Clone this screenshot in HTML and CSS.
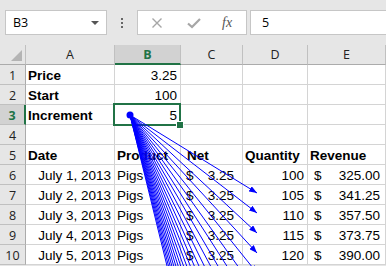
FILE: index.html
```html
<!DOCTYPE html>
<html lang="en">
<head>
  <meta charset="UTF-8">
  <title>Trace Dependents</title>
  <link rel="stylesheet" href="styles.css">
</head>
<body>
  <div class="formula-bar">
    <div class="name-box">
      <span>B3</span>
      <span class="caret"></span>
    </div>
    <div class="grip"><i></i><i></i><i></i></div>
    <div class="fx-box">
      <svg width="12" height="12" viewBox="0 0 12 12"><path d="M1.5 1.5 L10.5 10.5 M10.5 1.5 L1.5 10.5" stroke="#a6a6a6" stroke-width="1.4" fill="none"/></svg>
      <svg width="14" height="12" viewBox="0 0 14 12"><path d="M1 6.5 L5 10 L13 2" stroke="#a6a6a6" stroke-width="2.2" fill="none"/></svg>
      <span class="fx">fx</span>
    </div>
    <div class="formula-input">5</div>
  </div>

  <div class="grid">
    <div class="hd corner"></div>
    <div class="hd">A</div>
    <div class="hd active-col">B</div>
    <div class="hd">C</div>
    <div class="hd">D</div>
    <div class="hd">E</div>

    <div class="rn">1</div>
    <div class="c b">Price</div>
    <div class="c r">3.25</div>
    <div class="c"></div><div class="c"></div><div class="c"></div>

    <div class="rn">2</div>
    <div class="c b">Start</div>
    <div class="c r">100</div>
    <div class="c"></div><div class="c"></div><div class="c"></div>

    <div class="rn active-row">3</div>
    <div class="c b">Increment</div>
    <div class="c r">5</div>
    <div class="c"></div><div class="c"></div><div class="c"></div>

    <div class="rn">4</div>
    <div class="c"></div><div class="c"></div><div class="c"></div><div class="c"></div><div class="c"></div>

    <div class="rn">5</div>
    <div class="c b">Date</div>
    <div class="c b">Product</div>
    <div class="c b net">Net</div>
    <div class="c b">Quantity</div>
    <div class="c b">Revenue</div>

    <div class="rn">6</div>
    <div class="c r">July 1, 2013</div>
    <div class="c">Pigs</div>
    <div class="c acc"><span>$</span><span>3.25</span></div>
    <div class="c r">100</div>
    <div class="c acc rev"><span>$</span><span>325.00</span></div>

    <div class="rn">7</div>
    <div class="c r">July 2, 2013</div>
    <div class="c">Pigs</div>
    <div class="c acc"><span>$</span><span>3.25</span></div>
    <div class="c r">105</div>
    <div class="c acc rev"><span>$</span><span>341.25</span></div>

    <div class="rn">8</div>
    <div class="c r">July 3, 2013</div>
    <div class="c">Pigs</div>
    <div class="c acc"><span>$</span><span>3.25</span></div>
    <div class="c r">110</div>
    <div class="c acc rev"><span>$</span><span>357.50</span></div>

    <div class="rn">9</div>
    <div class="c r">July 4, 2013</div>
    <div class="c">Pigs</div>
    <div class="c acc"><span>$</span><span>3.25</span></div>
    <div class="c r">115</div>
    <div class="c acc rev"><span>$</span><span>373.75</span></div>

    <div class="rn">10</div>
    <div class="c r">July 5, 2013</div>
    <div class="c">Pigs</div>
    <div class="c acc"><span>$</span><span>3.25</span></div>
    <div class="c r">120</div>
    <div class="c acc rev"><span>$</span><span>390.00</span></div>
  </div>

  <div class="selection"><span class="handle"></span></div>

  <svg class="arrows" width="386" height="266" viewBox="0 0 386 266">
    <defs>
      <marker id="ah" markerWidth="8" markerHeight="6" refX="8" refY="3" orient="auto" markerUnits="userSpaceOnUse">
        <path d="M0 0 L8 3 L0 6 Z" fill="#0000ff"/>
      </marker>
    </defs>
    <g stroke="#0000ff" stroke-width="1" marker-end="url(#ah)">
      <line x1="130" y1="115" x2="257" y2="193"/>
      <line x1="130" y1="115" x2="257" y2="213"/>
      <line x1="130" y1="115" x2="257" y2="233"/>
      <line x1="130" y1="115" x2="257" y2="253"/>
      <line x1="130" y1="115" x2="257" y2="273"/>
      <line x1="130" y1="115" x2="257" y2="293"/>
      <line x1="130" y1="115" x2="257" y2="313"/>
      <line x1="130" y1="115" x2="257" y2="333"/>
      <line x1="130" y1="115" x2="257" y2="353"/>
      <line x1="130" y1="115" x2="257" y2="373"/>
      <line x1="130" y1="115" x2="257" y2="393"/>
      <line x1="130" y1="115" x2="257" y2="413"/>
      <line x1="130" y1="115" x2="257" y2="433"/>
      <line x1="130" y1="115" x2="257" y2="453"/>
      <line x1="130" y1="115" x2="257" y2="473"/>
      <line x1="130" y1="115" x2="257" y2="493"/>
      <line x1="130" y1="115" x2="257" y2="513"/>
      <line x1="130" y1="115" x2="257" y2="533"/>
      <line x1="130" y1="115" x2="257" y2="553"/>
      <line x1="130" y1="115" x2="257" y2="573"/>
      <line x1="130" y1="115" x2="257" y2="593"/>
      <line x1="130" y1="115" x2="257" y2="613"/>
      <line x1="130" y1="115" x2="257" y2="633"/>
    </g>
    <circle cx="130" cy="115" r="3.5" fill="#0000ff"/>
  </svg>
</body>
</html>
```

FILE: styles.css
```css
body {
  margin: 0;
  position: relative;
  width: 386px;
  height: 266px;
  overflow: hidden;
  background: #e6e6e6;
  font-family: "Liberation Sans", Arial, sans-serif;
  color: #000;
}

.formula-bar {
  height: 45px;
  box-sizing: border-box;
  padding: 10px 0 0 5px;
  display: flex;
  align-items: flex-start;
  font-family: "Open Sans", "Noto Sans", sans-serif;
  font-size: 12.5px;
}

.name-box {
  width: 102px;
  height: 25px;
  box-sizing: border-box;
  background: #fff;
  border: 1px solid #c6c6c6;
  display: flex;
  align-items: center;
  justify-content: space-between;
  padding: 0 7px 0 7px;
}

.caret {
  width: 0;
  height: 0;
  border-left: 4px solid transparent;
  border-right: 4px solid transparent;
  border-top: 4px solid #555;
}

.grip {
  width: 30px;
  height: 25px;
  display: flex;
  flex-direction: column;
  align-items: center;
  justify-content: center;
  gap: 2px;
}

.grip i {
  width: 2px;
  height: 2px;
  background: #666;
}

.fx-box {
  width: 110px;
  height: 25px;
  box-sizing: border-box;
  background: #fff;
  border: 1px solid #c6c6c6;
  display: flex;
  align-items: center;
  padding: 0 0 0 13px;
  gap: 24px;
}

.fx-box svg {
  flex: none;
}

.fx {
  font-family: "Liberation Serif", serif;
  font-style: italic;
  font-size: 14px;
  color: #555;
  margin-left: -3px;
}

.formula-input {
  flex: 1;
  height: 25px;
  box-sizing: border-box;
  margin-left: 3px;
  background: #fff;
  border: 1px solid #c6c6c6;
  border-right: none;
  padding: 0 0 0 11px;
  line-height: 23px;
}

.grid {
  display: grid;
  grid-template-columns: 26px 89px 66px 62px 65px 78px;
  grid-auto-rows: 20px;
  background: #fff;
  font-size: 13.5px;
}

.grid > div {
  box-sizing: border-box;
  border-right: 1px solid #d4d4d4;
  border-bottom: 1px solid #d4d4d4;
  line-height: 19px;
  padding-top: 1px;
  white-space: nowrap;
  overflow: visible;
}

.grid .hd {
  background: #e6e6e6;
  border-right-color: #c0c0c0;
  border-bottom-color: #ababab;
  text-align: center;
  font-family: "Open Sans", "Noto Sans", sans-serif;
  font-size: 12.5px;
  line-height: 20px;
  padding-top: 0;
  color: #222;
}

.grid .corner {
  position: relative;
}

.corner::after {
  content: "";
  position: absolute;
  right: 3px;
  bottom: 3px;
  width: 11px;
  height: 11px;
  background: #b4b4b4;
  clip-path: polygon(100% 0, 100% 100%, 0 100%);
}

.grid .active-col {
  background: #d2d2d2;
  color: #217346;
  font-weight: bold;
  border-bottom: 2px solid #217346;
}

.grid .rn {
  background: #e6e6e6;
  border-right-color: #ababab;
  border-bottom-color: #c0c0c0;
  text-align: center;
  font-family: "Open Sans", "Noto Sans", sans-serif;
  font-size: 12.5px;
  color: #222;
}

.grid .active-row {
  background: #d2d2d2;
  color: #217346;
  font-weight: bold;
  border-right: 2px solid #217346;
}

.c {
  padding-left: 2px;
  padding-right: 3px;
}

.c.b {
  font-weight: bold;
}

.c.r {
  text-align: right;
}

.c.net {
  padding-left: 6px;
}

.c.acc {
  display: flex;
  justify-content: space-between;
  padding-left: 5px;
  padding-right: 8px;
}

.c.acc.rev {
  padding-left: 6px;
  padding-right: 5px;
}

.selection {
  position: absolute;
  left: 113px;
  top: 103px;
  width: 68px;
  height: 23px;
  box-sizing: border-box;
  border: 2px solid #217346;
}

.handle {
  position: absolute;
  right: -5px;
  bottom: -5px;
  width: 6px;
  height: 6px;
  background: #217346;
  border: 1px solid #fff;
}

.arrows {
  position: absolute;
  left: 0;
  top: 0;
}
```
